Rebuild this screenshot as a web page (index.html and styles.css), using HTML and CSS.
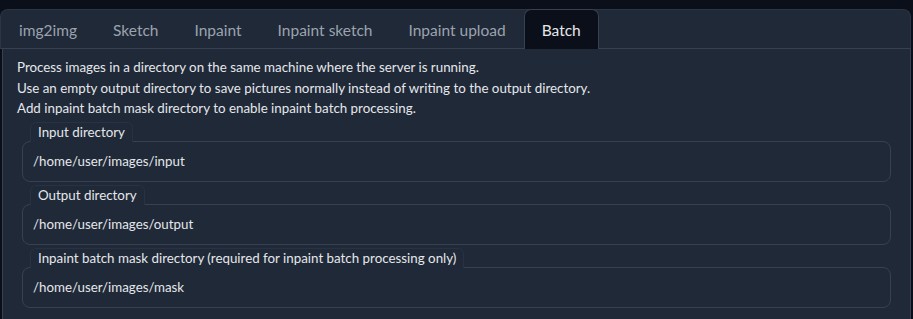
FILE: index.html
```html
<!DOCTYPE html>
<html>
<head>
<meta charset="utf-8">
<link rel="stylesheet" href="styles.css">
</head>
<body>
<div class="tabs">
  <div class="tab-nav">
    <button class="tab">img2img</button>
    <button class="tab">Sketch</button>
    <button class="tab">Inpaint</button>
    <button class="tab">Inpaint sketch</button>
    <button class="tab">Inpaint upload</button>
    <button class="tab selected">Batch</button>
  </div>
  <div class="panel">
    <p class="desc">Process images in a directory on the same machine where the server is running.<br>Use an empty output directory to save pictures normally instead of writing to the output directory.<br>Add inpaint batch mask directory to enable inpaint batch processing.</p>
    <div class="fields">
      <label class="field">
        <span class="badge">Input directory</span>
        <span class="input">/home/user/images/input</span>
      </label>
      <label class="field">
        <span class="badge">Output directory</span>
        <span class="input">/home/user/images/output</span>
      </label>
      <label class="field">
        <span class="badge">Inpaint batch mask directory (required for inpaint batch processing only)</span>
        <span class="input">/home/user/images/mask</span>
      </label>
    </div>
  </div>
</div>
</body>
</html>
```
FILE: styles.css
```css
html, body {
  margin: 0;
  padding: 0;
  background: #0b0f19;
  height: 100%;
  overflow: hidden;
}
body {
  font-family: Lato, "Noto Sans", sans-serif;
  color: #e5e7eb;
  padding-top: 9px;
  box-sizing: border-box;
}
.tabs {
  width: 911px;
}
.tab-nav {
  display: flex;
  background: #1f2937;
  border: 1px solid #2b3544;
  border-bottom: 1px solid #374151;
  border-radius: 8px 8px 0 0;
  box-sizing: border-box;
  height: 40px;
}
.tab {
  font-family: inherit;
  font-size: 15.5px;
  color: #9ca3af;
  background: transparent;
  border: 1px solid transparent;
  border-bottom: none;
  padding: 0 17px;
  margin: 0;
  height: 39px;
  border-radius: 7px 7px 0 0;
  line-height: 38px;
  cursor: pointer;
}
.tab.selected {
  background: #0b0f19;
  border-color: #374151;
  color: #e5e7eb;
  height: 40px;
  margin-bottom: -1px;
  margin-top: -1px;
}
.panel {
  background: #1f2937;
  margin-left: 2px;
  border-left: 1px solid #374151;
  border-right: 1px solid #374151;
  padding: 8px 14px 12px 14px;
  height: 250px;
}
.desc {
  margin: 0;
  font-size: 13.35px;
  line-height: 20.5px;
}
.fields {
  display: flex;
  flex-direction: column;
  gap: 3px;
  padding: 3px 5px 0 5px;
}
.field {
  display: flex;
  flex-direction: column;
  align-items: flex-start;
}
.badge {
  margin-left: 8px;
  height: 20px;
  line-height: 19px;
  padding: 0 7px;
  font-size: 13.35px;
  color: #e5e7eb;
  background: #1f2937;
  border: 1px solid #283242;
  border-bottom: none;
  border-radius: 6px 6px 0 0;
  box-sizing: border-box;
  position: relative;
  z-index: 1;
  margin-bottom: -1px;
}
.input {
  align-self: stretch;
  height: 41px;
  box-sizing: border-box;
  border: 1px solid #374151;
  border-radius: 8px;
  padding: 0 10px;
  line-height: 39px;
  font-size: 13.3px;
  color: #e5e7eb;
}
```
